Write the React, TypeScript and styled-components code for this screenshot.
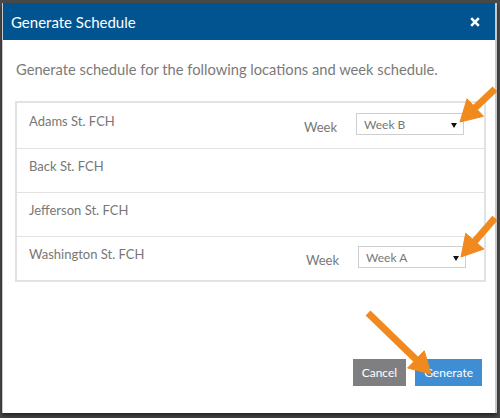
import React from "react";
import styled, {createGlobalStyle} from "styled-components";

const Global = createGlobalStyle`
  html, body {
    margin: 0;
    padding: 0;
    background: #4a4a4a;
    font-family: Lato, "Open Sans", sans-serif;
  }
`

const Page = styled.div`
  position: relative;
  width: 500px;
  height: 418px;
  padding: 3px 3px 0 2px;
  box-sizing: border-box;
`

const Modal = styled.div`
  width: 495px;
  height: 410px;
  background: #fff;
  border-left: 1px solid #c9c9c9;
  border-right: 2px solid #c9c9c9;
  box-sizing: border-box;
  display: flex;
  flex-direction: column;
  box-shadow: 0 3px 4px rgba(0, 0, 0, 0.5);
`

const Header = styled.div`
  height: 37px;
  background: #01548f;
  color: #fff;
  display: flex;
  align-items: center;
  justify-content: space-between;
  padding: 0 15px 0 8px;
  font-size: 15px;
`

const Close = styled.svg`
  display: block;
  margin-top: 1px;
`

const Body = styled.div`
  flex: 1;
  padding: 19px 9px 0 12px;
  display: flex;
  flex-direction: column;
`

const Intro = styled.p`
  margin: 0 0 22px 1px;
  font-size: 14.7px;
  color: #7a7a7a;
  line-height: 20px;
`

const Table = styled.div`
  border: 2px solid #e2e2e2;
  display: flex;
  flex-direction: column;
`

const Row = styled.div<{ $right?: number }>`
  height: 44px;
  box-sizing: border-box;
  display: flex;
  align-items: flex-start;
  padding: 8px ${p => p.$right ?? 20}px 0 12px;
  border-top: 1px solid #e2e2e2;
  &:first-child {
    border-top: none;
    height: 45px;
    padding-top: 9px;
  }
`

const Name = styled.div`
  flex: 1;
  font-size: 13px;
  color: #777;
  line-height: 18px;
`

const Label = styled.span`
  font-size: 13px;
  color: #777;
  margin: 7px 19px 0 0;
`

const Select = styled.div`
  width: 108px;
  height: 22px;
  box-sizing: border-box;
  border: 1px solid #cfcfcf;
  background: #fff;
  display: flex;
  align-items: center;
  justify-content: space-between;
  padding: 0 6px 0 7px;
  font-size: 12px;
  color: #777;
  margin-top: 1px;
`

const Caret = styled.span`
  width: 0;
  height: 0;
  border-left: 3px solid transparent;
  border-right: 3px solid transparent;
  border-top: 5px solid #111;
  margin-top: 2px;
`

const Footer = styled.div`
  margin-top: auto;
  display: flex;
  justify-content: flex-end;
  gap: 9px;
  padding: 0 4px 27px 0;
`

const Button = styled.button<{ $primary?: boolean }>`
  height: 27px;
  border: none;
  color: #fff;
  font-family: Lato, sans-serif;
  font-size: 12px;
  padding: 0 9px;
  background: ${p => p.$primary ? "#3f8ed3" : "#7f7f82"};
`

const Overlay = styled.svg`
  position: absolute;
  left: 0;
  top: 0;
  pointer-events: none;
`

function Arrow({x1, y1, x2, y2}: { x1: number, y1: number, x2: number, y2: number }) {
    const len = Math.hypot(x2 - x1, y2 - y1)
    const dx = (x2 - x1) / len
    const dy = (y2 - y1) / len
    const L = 21
    const W = 12
    const bx = x2 - dx * L
    const by = y2 - dy * L
    const pts = [
        [x2, y2],
        [bx - dy * W, by + dx * W],
        [bx + dy * W, by - dx * W],
    ].map(p => p.join(",")).join(" ")
    return (
        <g fill="#f08a1f" stroke="#f08a1f">
            <line x1={x1} y1={y1} x2={bx + dx * 2} y2={by + dy * 2} strokeWidth={7}/>
            <polygon points={pts} strokeWidth={1} strokeLinejoin="round"/>
        </g>
    )
}

const locations = [
    {name: "Adams St. FCH", week: "Week B", right: 20},
    {name: "Back St. FCH"},
    {name: "Jefferson St. FCH"},
    {name: "Washington St. FCH", week: "Week A", right: 18},
]

export default function App() {
    return (
        <Page>
            <Global/>
            <Modal>
                <Header>
                    <span>Generate Schedule</span>
                    <Close width={10} height={10} viewBox="0 0 10 10">
                        <path d="M1.2 1.2 L8.8 8.8 M8.8 1.2 L1.2 8.8" stroke="#fff" strokeWidth={2.6}/>
                    </Close>
                </Header>
                <Body>
                    <Intro>Generate schedule for the following locations and week schedule.</Intro>
                    <Table>
                        {locations.map(l => (
                            <Row key={l.name} $right={l.right}>
                                <Name>{l.name}</Name>
                                {l.week && <>
                                    <Label>Week</Label>
                                    <Select>{l.week}<Caret/></Select>
                                </>}
                            </Row>
                        ))}
                    </Table>
                    <Footer>
                        <Button>Cancel</Button>
                        <Button $primary>Generate</Button>
                    </Footer>
                </Body>
            </Modal>
            <Overlay width={500} height={418}>
                <Arrow x1={495} y1={89} x2={460} y2={122}/>
                <Arrow x1={495} y1={218} x2={461} y2={257}/>
                <Arrow x1={368} y1={313} x2={431} y2={374}/>
            </Overlay>
        </Page>
    )
}
